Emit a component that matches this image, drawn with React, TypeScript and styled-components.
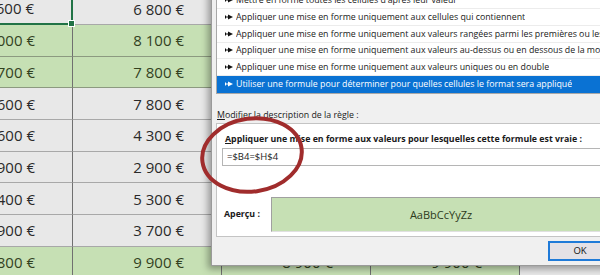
import React from "react";
import styled, { createGlobalStyle } from "styled-components";

const Global = createGlobalStyle`
  html, body { margin: 0; padding: 0; overflow: hidden; background: #e8e8e8; }
  #root { width: 600px; height: 275px; }
`;

const Page = styled.div`
  position: relative;
  width: 600px;
  height: 275px;
  overflow: hidden;
  background: #e8e8e8;
`;

const Sheet = styled.div`
  display: flex;
  flex-direction: column;
  margin-top: -6.67px;
  margin-left: -76px;
`;

const Row = styled.div`
  display: grid;
  grid-template-columns: repeat(5, 149px);
  height: 31.67px;
`;

const Cell = styled.div<{ $hi?: boolean; $sel?: boolean }>`
  position: relative;
  box-sizing: border-box;
  display: flex;
  align-items: center;
  justify-content: flex-end;
  padding-right: 37px;
  background: ${(p) => (p.$hi ? "#c6e0b4" : "#e8e8e8")};
  color: ${(p) => (p.$hi ? "#33421f" : "#2a2a2a")};
  border-right: 1px solid #707070;
  border-bottom: 1px solid ${(p) => (p.$hi ? "#8c9a80" : "#a8a8a8")};
  font-family: "Open Sans", sans-serif;
  font-size: 15px;
  white-space: nowrap;
  ${(p) =>
    p.$sel &&
    `
    z-index: 1;
    border-right: 2px solid #217346;
    border-bottom: 2px solid #217346;
    &::after {
      content: "";
      position: absolute;
      right: -4px;
      bottom: -4px;
      width: 5px;
      height: 5px;
      background: #217346;
      border: 1px solid #fff;
    }
  `}
`;

const Dialog = styled.div`
  position: absolute;
  left: 211px;
  top: -20px;
  width: 430px;
  height: 286px;
  box-sizing: border-box;
  background: #f0f0f0;
  border: 1px solid #9a9a9a;
  box-shadow: -3px 3px 7px rgba(0, 0, 0, 0.35);
  padding: 10.67px 0 0 4px;
  display: flex;
  flex-direction: column;
  font-family: "Open Sans", sans-serif;
  color: #1a1a1a;
`;

const RuleList = styled.div`
  border: 1px solid #a8a8a8;
  border-right: none;
  background: #fff;
  display: flex;
  flex-direction: column;
`;

const RuleItem = styled.div<{ $active?: boolean }>`
  box-sizing: border-box;
  height: 16.67px;
  display: flex;
  align-items: center;
  gap: 3px;
  padding-left: 8px;
  font-size: 8.8px;
  white-space: nowrap;
  overflow: hidden;
  background: ${(p) => (p.$active ? "#0a72d3" : "#fff")};
  color: ${(p) => (p.$active ? "#fff" : "#1a1a1a")};
  border-bottom: 1px solid ${(p) => (p.$active ? "#0a72d3" : "#ececec")};
  svg { flex-shrink: 0; }
`;

const RuleText = styled.span`
  overflow: hidden;
`;

const Arrow = ({ color }: { color: string }) => (
  <svg width="8" height="6" viewBox="0 0 8 6">
    <rect x="0" y="1.5" width="1" height="3" fill={color} />
    <rect x="0" y="2.5" width="4" height="1" fill={color} />
    <polygon points="3,0.5 8,3 3,5.5" fill={color} />
  </svg>
);

const SectionLabel = styled.div`
  margin-top: 14px;
  height: 14px;
  display: flex;
  align-items: center;
  padding-left: 1px;
  font-size: 8.8px;
  white-space: nowrap;
  u { text-decoration: underline; }
`;

const Panel = styled.div`
  margin-top: 1.33px;
  height: 114px;
  box-sizing: border-box;
  background: #fff;
  border: 1px solid #c4c4c4;
  border-right: none;
  padding: 8px 0 0 5px;
  display: flex;
  flex-direction: column;
  overflow: hidden;
`;

const PanelTitle = styled.div`
  height: 14px;
  display: flex;
  align-items: center;
  padding-left: 3px;
  font-size: 8.8px;
  font-weight: 700;
  white-space: nowrap;
`;

const FormulaInput = styled.div`
  margin-top: 2px;
  height: 18px;
  box-sizing: border-box;
  border: 1px solid #b5b5b5;
  border-right: none;
  display: flex;
  align-items: center;
  padding-left: 4px;
  font-size: 9.5px;
  color: #1a1a1a;
`;

const PreviewRow = styled.div`
  margin-top: 31px;
  display: flex;
  align-items: center;
`;

const PreviewLabel = styled.div`
  width: 47px;
  padding-left: 2px;
  font-size: 8.8px;
  font-weight: 700;
  white-space: nowrap;
`;

const PreviewBox = styled.div`
  width: 340px;
  height: 35px;
  box-sizing: border-box;
  background: #c6e0b4;
  border: 1px solid #a0a0a0;
  border-right-color: #e0e0e0;
  border-bottom-color: #e0e0e0;
  display: flex;
  align-items: center;
  justify-content: center;
  font-size: 11px;
  color: #2e3b1c;
`;

const ButtonRow = styled.div`
  display: flex;
  padding: 4px 0 0 332px;
`;

const OkButton = styled.div`
  width: 64px;
  height: 20px;
  box-sizing: border-box;
  border: 2px solid #1f7ad8;
  background: #e4e1e6;
  display: flex;
  align-items: center;
  justify-content: center;
  font-size: 9.5px;
  color: #111;
`;

const Annotation = styled.svg`
  position: absolute;
  left: 0;
  top: 0;
  pointer-events: none;
`;

const rows: { a: string; b: string; c: string; d: string; hi?: boolean }[] = [
  { a: "4 600 €", b: "6 800 €", c: "5 200 €", d: "6 100 €" },
  { a: "9 000 €", b: "8 100 €", c: "7 400 €", d: "8 300 €", hi: true },
  { a: "8 700 €", b: "7 800 €", c: "6 900 €", d: "7 200 €", hi: true },
  { a: "5 600 €", b: "7 800 €", c: "4 800 €", d: "5 900 €" },
  { a: "3 600 €", b: "4 300 €", c: "3 100 €", d: "4 700 €" },
  { a: "2 900 €", b: "2 900 €", c: "3 800 €", d: "2 600 €" },
  { a: "6 400 €", b: "5 300 €", c: "5 700 €", d: "6 200 €" },
  { a: "3 900 €", b: "3 700 €", c: "4 100 €", d: "3 300 €" },
  { a: "9 800 €", b: "9 900 €", c: "8 900 €", d: "9 900 €", hi: true },
];

const rules = [
  "Mettre en forme toutes les cellules d'après leur valeur",
  "Appliquer une mise en forme uniquement aux cellules qui contiennent",
  "Appliquer une mise en forme uniquement aux valeurs rangées parmi les premières ou les dernières valeurs",
  "Appliquer une mise en forme uniquement aux valeurs au-dessus ou en dessous de la moyenne",
  "Appliquer une mise en forme uniquement aux valeurs uniques ou en double",
  "Utiliser une formule pour déterminer pour quelles cellules le format sera appliqué",
];

export default function App() {
  return (
    <Page>
      <Global />
      <Sheet>
        {rows.map((r, i) => (
          <Row key={i}>
            <Cell $hi={r.hi} $sel={i === 0}>{r.a}</Cell>
            <Cell $hi={r.hi}>{r.b}</Cell>
            <Cell $hi={r.hi}>{r.c}</Cell>
            <Cell $hi={r.hi}>{r.d}</Cell>
            <Cell>{""}</Cell>
          </Row>
        ))}
      </Sheet>
      <Dialog>
        <RuleList>
          {rules.map((t, i) => (
            <RuleItem key={i} $active={i === rules.length - 1}>
              <Arrow color={i === rules.length - 1 ? "#fff" : "#111"} />
              <RuleText>{t}</RuleText>
            </RuleItem>
          ))}
        </RuleList>
        <SectionLabel>
          <span>
            <u>M</u>odifier la description de la règle :
          </span>
        </SectionLabel>
        <Panel>
          <PanelTitle>
            <span>
              <u>A</u>ppliquer une mise en forme aux valeurs pour lesquelles cette formule est vraie :
            </span>
          </PanelTitle>
          <FormulaInput>=$B4=$H$4</FormulaInput>
          <PreviewRow>
            <PreviewLabel>Aperçu :</PreviewLabel>
            <PreviewBox>AaBbCcYyZz</PreviewBox>
          </PreviewRow>
        </Panel>
        <ButtonRow>
          <OkButton>OK</OkButton>
        </ButtonRow>
      </Dialog>
      <Annotation width="600" height="275" viewBox="0 0 600 275">
        <ellipse
          cx="252"
          cy="155"
          rx="50"
          ry="36.5"
          fill="none"
          stroke="#a02c2c"
          strokeWidth="4"
          transform="rotate(-8 252 155)"
        />
      </Annotation>
    </Page>
  );
}
